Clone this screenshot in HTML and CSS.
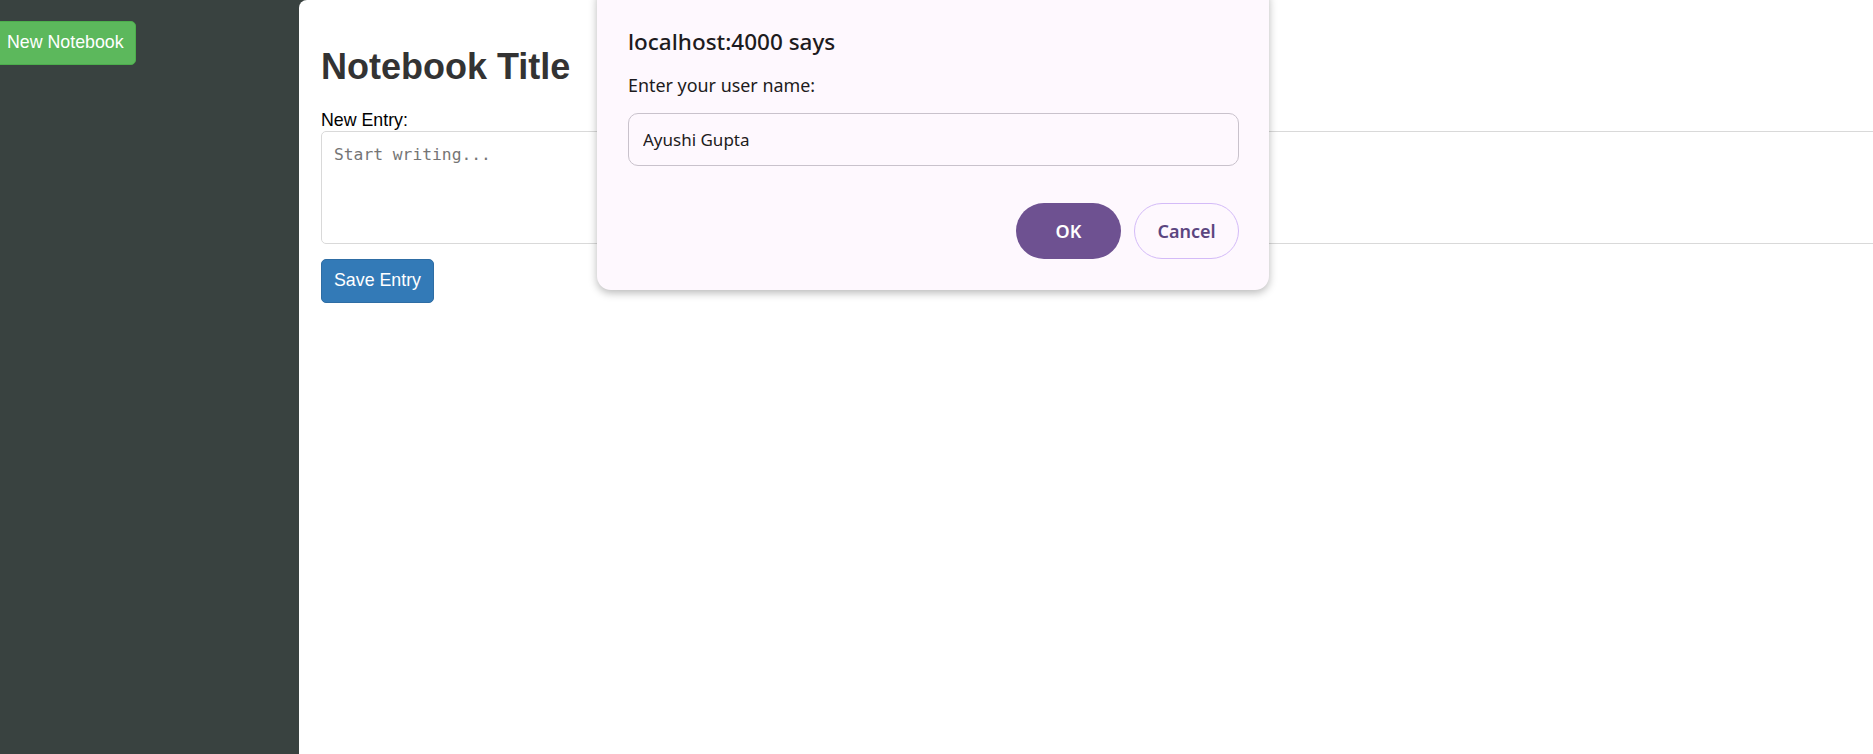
FILE: index.html
```html
<!DOCTYPE html>
<html lang="en">
<head>
<meta charset="utf-8">
<title>Notebook</title>
<link rel="stylesheet" href="styles.css">
</head>
<body>
<div class="app">
  <aside class="sidebar">
    <button class="btn btn-new" type="button">New Notebook</button>
  </aside>
  <main class="main">
    <h1 class="title">Notebook Title</h1>
    <label class="entry-label" for="entry">New Entry:</label>
    <textarea id="entry" class="entry" placeholder="Start writing..."></textarea>
    <button class="btn btn-save" type="button">Save Entry</button>
  </main>
</div>
<div class="dialog" role="dialog">
  <div class="dialog-title">localhost:4000 says</div>
  <div class="dialog-message">Enter your user name:</div>
  <input class="dialog-input" type="text" value="Ayushi Gupta">
  <div class="dialog-actions">
    <button class="dbtn dbtn-ok" type="button">OK</button>
    <button class="dbtn dbtn-cancel" type="button">Cancel</button>
  </div>
</div>
</body>
</html>
```

FILE: styles.css
```css
html, body {
  margin: 0;
  padding: 0;
  height: 100%;
  overflow: hidden;
}
body {
  background: #394240;
  font-family: "Liberation Sans", Arial, sans-serif;
}
.app {
  display: flex;
  height: 100vh;
}
.sidebar {
  width: 299px;
  flex: 0 0 299px;
  background: #394240;
  padding-top: 21px;
  box-sizing: border-box;
}
.btn {
  font-family: "Liberation Sans", Arial, sans-serif;
  font-size: 17.8px;
  color: #fff;
  border: 1px solid transparent;
  border-radius: 5px;
  height: 43.5px;
  padding: 0 12px;
  cursor: pointer;
  display: block;
}
.btn-new {
  background: #5cb85c;
  border-color: #4cae4c;
  margin-left: -5px;
  padding: 0 11px 0 11px;
}
.main {
  flex: 1;
  background: #fff;
  border-top-left-radius: 8px;
  padding: 47px 0 0 22px;
  overflow: hidden;
  min-width: 0;
}
.title {
  margin: 0 0 22px;
  font-size: 36px;
  line-height: 39.6px;
  font-weight: bold;
  color: #333;
}
.entry-label {
  display: block;
  font-size: 17.8px;
  line-height: 22.5px;
  color: #000;
}
.entry {
  display: block;
  box-sizing: border-box;
  width: calc(100% + 40px);
  height: 112.5px;
  border: 1px solid #d9d9d9;
  border-radius: 5px;
  padding: 10.5px 12px 7px;
  font-family: "DejaVu Sans Mono", "Liberation Mono", monospace;
  font-size: 16.3px;
  line-height: 23px;
  resize: none;
  margin: 0;
}
.entry::placeholder {
  color: #757575;
}
.btn-save {
  margin-top: 15.5px;
  background: #337ab7;
  border-color: #2e6da4;
}

.dialog {
  position: absolute;
  left: 597px;
  top: -14px;
  width: 672px;
  box-sizing: border-box;
  padding: 41px 30px 31px 31px;
  background: #fef8fe;
  border-radius: 14px;
  box-shadow: 0 3px 9px rgba(0, 0, 0, 0.28);
  font-family: "Noto Sans", "Open Sans", sans-serif;
  color: #1d1b20;
}
.dialog-title {
  font-size: 22.5px;
  font-weight: 500;
  line-height: 30px;
}
.dialog-message {
  margin-top: 16px;
  font-size: 17.9px;
  line-height: 24px;
}
.dialog-input {
  display: block;
  box-sizing: border-box;
  width: 100%;
  height: 53px;
  margin-top: 16px;
  padding: 0 14px;
  border: 1.5px solid #c9c2cc;
  border-radius: 10px;
  background: #fef8fe;
  font-family: "Noto Sans", "Open Sans", sans-serif;
  font-size: 17px;
  color: #1d1b20;
  outline: none;
}
.dialog-actions {
  display: flex;
  justify-content: flex-end;
  gap: 13px;
  margin-top: 37px;
}
.dbtn {
  width: 105px;
  height: 56px;
  border-radius: 28px;
  font-family: "Noto Sans", "Open Sans", sans-serif;
  font-size: 18px;
  font-weight: 600;
  cursor: pointer;
}
.dbtn-ok {
  background: #6e5191;
  border: none;
  color: #fff;
}
.dbtn-cancel {
  background: #fef8fe;
  border: 1.5px solid #d4bbf8;
  color: #5b4580;
}
```
